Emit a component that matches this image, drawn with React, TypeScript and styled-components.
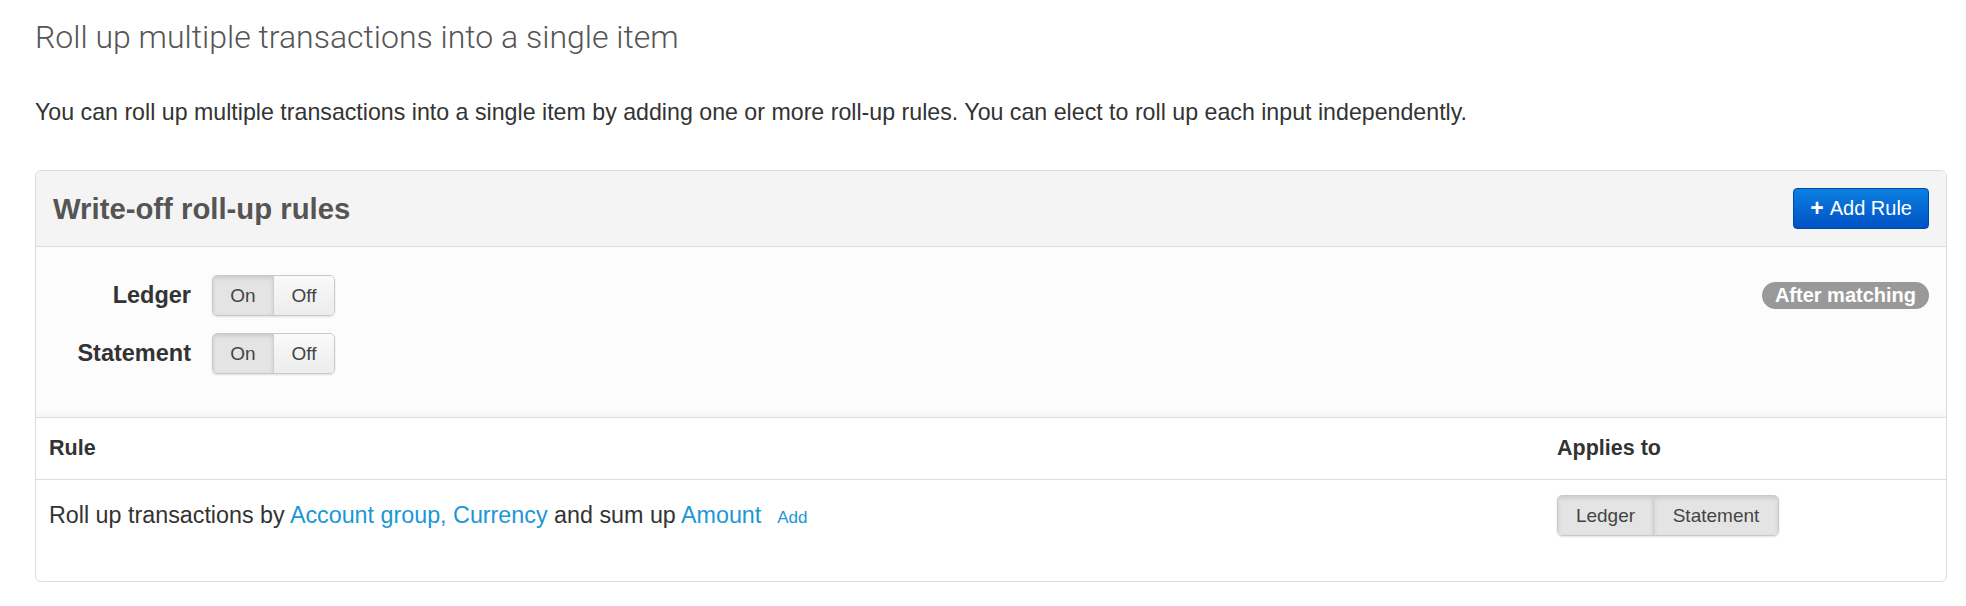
import React from 'react';
import styled, { createGlobalStyle, css } from 'styled-components';

const GlobalStyle = createGlobalStyle`
  html, body { margin: 0; padding: 0; background: #fff; }
  body {
    font-family: 'Liberation Sans', Arial, sans-serif;
    color: #333;
  }
`;

const Page = styled.main`
  padding: 17px 19px 24px 35px;
`;

const Title = styled.h1`
  margin: 0;
  font-family: 'Roboto', 'Liberation Sans', sans-serif;
  font-weight: 300;
  font-size: 32px;
  line-height: 40px;
  color: #555;
`;

const Intro = styled.p`
  margin: 41px 0 0;
  font-size: 23.2px;
  line-height: 28px;
  color: #333;
`;

const Panel = styled.section`
  margin-top: 44px;
  border: 1px solid #dcdcdc;
  border-radius: 6px;
  overflow: hidden;
  background: #fff;
`;

const PanelHeader = styled.header`
  display: flex;
  align-items: center;
  justify-content: space-between;
  height: 75px;
  padding: 0 17px;
  background: #f4f4f4;
  border-bottom: 1px solid #dedede;
`;

const PanelTitle = styled.h2`
  margin: 0;
  font-size: 29.3px;
  font-weight: 700;
  color: #555;
`;

const PrimaryButton = styled.button`
  display: inline-flex;
  align-items: center;
  gap: 6px;
  height: 41px;
  padding: 0 16px;
  border: 1px solid #0047ad;
  border-radius: 4px;
  background: linear-gradient(#0b80e2, #0052c4);
  color: #fff;
  font-family: 'Liberation Sans', Arial, sans-serif;
  font-size: 20px;
  cursor: pointer;

  b { font-size: 23px; line-height: 1; }
`;

const PanelBody = styled.div`
  display: flex;
  justify-content: space-between;
  align-items: flex-start;
  padding: 28px 17px 43px 26px;
  background: #fcfcfc;
  box-shadow: inset 0 -10px 10px -10px rgba(0, 0, 0, 0.06);
  border-bottom: 1px solid #dedede;
`;

const SwitchList = styled.div`
  display: grid;
  grid-template-columns: 129px auto;
  column-gap: 21px;
  row-gap: 17px;
  align-items: center;
`;

const SwitchLabel = styled.span`
  text-align: right;
  font-size: 23.5px;
  font-weight: 700;
  color: #333;
`;

const Segmented = styled.div`
  display: inline-flex;
  border: 1px solid #c9c9c9;
  border-radius: 5px;
  overflow: hidden;
  box-shadow: 0 1px 2px rgba(0, 0, 0, 0.12);
`;

const Segment = styled.span<{ $active?: boolean; $w: number }>`
  display: inline-flex;
  align-items: center;
  justify-content: center;
  width: ${(p) => p.$w}px;
  height: 39px;
  font-size: 19px;
  color: #444;
  background: linear-gradient(#fafafa, #ececec);

  & + & { border-left: 1px solid #cfcfcf; }

  ${(p) =>
    p.$active &&
    css`
      background: #e4e4e4;
      box-shadow: inset 0 2px 4px rgba(0, 0, 0, 0.12);
    `}
`;

const Badge = styled.span`
  margin-top: 7px;
  padding: 4px 13px 4px;
  border-radius: 14px;
  background: #999;
  color: #fff;
  font-size: 20px;
  font-weight: 700;
  line-height: 19px;
`;

const Table = styled.table`
  width: 100%;
  border-collapse: collapse;
  margin-bottom: 29px;
`;

const HeadCell = styled.th<{ $width?: number }>`
  text-align: left;
  padding: 18px 13px 18px;
  font-size: 21.5px;
  font-weight: 700;
  color: #333;
  border-bottom: 1px solid #dedede;
  ${(p) => p.$width && `width: ${p.$width}px;`}
`;

const Cell = styled.td`
  padding: 15px 13px 16px;
  font-size: 23.3px;
  color: #333;
  vertical-align: middle;
`;

const Link = styled.a<{ $small?: boolean }>`
  color: #1b97d6;
  text-decoration: none;
  ${(p) =>
    p.$small &&
    css`
      font-size: 17px;
      margin-left: 16px;
    `}
`;

function Toggle({ on }: { on: boolean }) {
  return (
    <Segmented>
      <Segment $w={60} $active={on}>On</Segment>
      <Segment $w={60} $active={!on}>Off</Segment>
    </Segmented>
  );
}

export default function App() {
  return (
    <>
      <GlobalStyle />
      <Page>
        <Title>Roll up multiple transactions into a single item</Title>
        <Intro>
          You can roll up multiple transactions into a single item by adding one or more roll-up rules. You can
          elect to roll up each input independently.
        </Intro>

        <Panel>
          <PanelHeader>
            <PanelTitle>Write-off roll-up rules</PanelTitle>
            <PrimaryButton>
              <b>+</b> Add Rule
            </PrimaryButton>
          </PanelHeader>

          <PanelBody>
            <SwitchList>
              <SwitchLabel>Ledger</SwitchLabel>
              <Toggle on />
              <SwitchLabel>Statement</SwitchLabel>
              <Toggle on />
            </SwitchList>
            <Badge>After matching</Badge>
          </PanelBody>

          <Table>
            <thead>
              <tr>
                <HeadCell>Rule</HeadCell>
                <HeadCell $width={376}>Applies to</HeadCell>
              </tr>
            </thead>
            <tbody>
              <tr>
                <Cell>
                  Roll up transactions by <Link href="#">Account group, Currency</Link> and sum up{' '}
                  <Link href="#">Amount</Link>
                  <Link href="#" $small>Add</Link>
                </Cell>
                <Cell>
                  <Segmented>
                    <Segment $w={95} $active>Ledger</Segment>
                    <Segment $w={124} $active>Statement</Segment>
                  </Segmented>
                </Cell>
              </tr>
            </tbody>
          </Table>
        </Panel>
      </Page>
    </>
  );
}
